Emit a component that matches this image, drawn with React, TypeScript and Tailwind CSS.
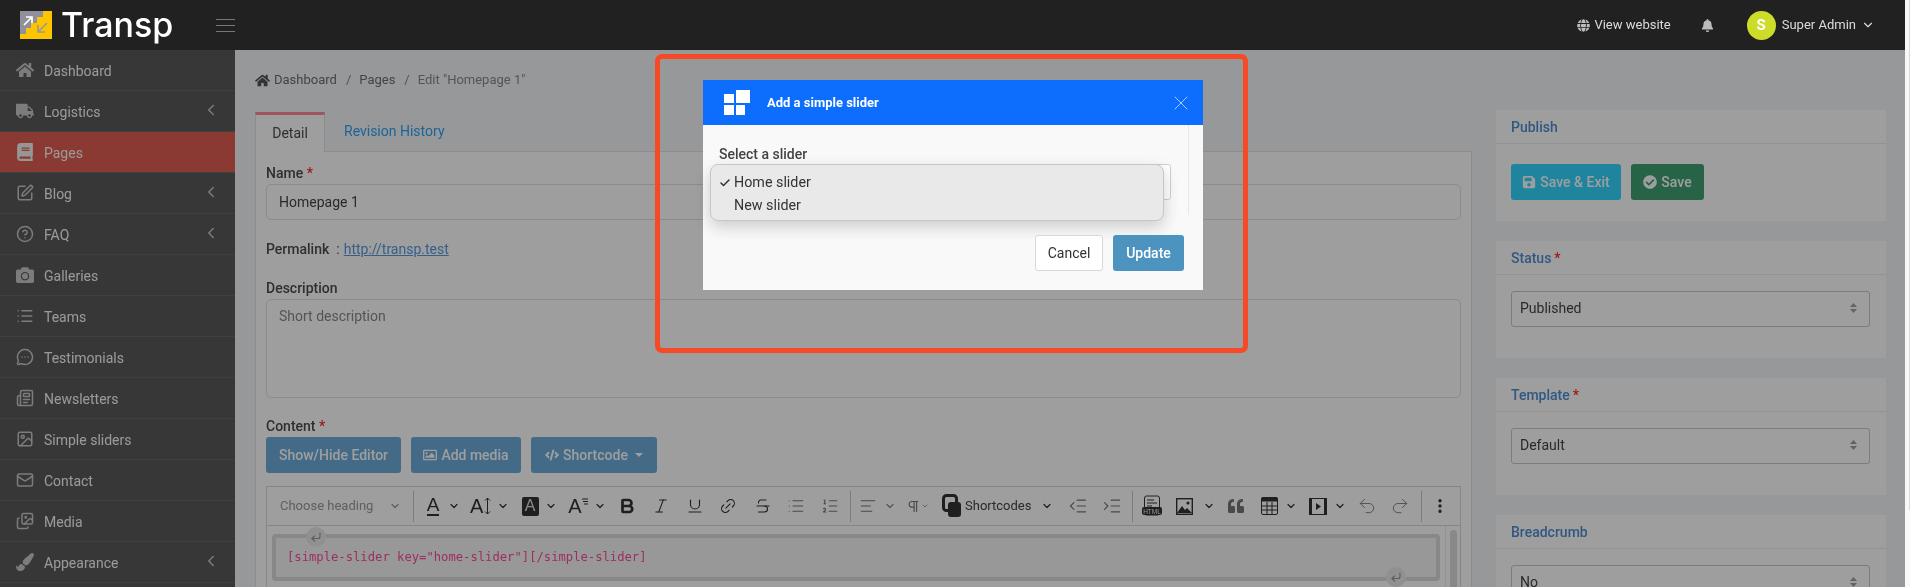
import type { ReactNode } from "react";
import {
  AlignLeft,
  Bold,
  Check,
  ChevronDown,
  ChevronLeft,
  CircleHelp,
  CornerDownLeft,
  EllipsisVertical,
  Image,
  Images,
  Indent,
  Italic,
  Link2,
  List,
  ListOrdered,
  Mail,
  MessageCircleMore,
  Newspaper,
  Outdent,
  Pilcrow,
  Redo2,
  SquarePen,
  Strikethrough,
  Underline,
  Undo2,
  X,
} from "lucide-react";
import {
  FaBell,
  FaBook,
  FaCamera,
  FaCheckCircle,
  FaCode,
  FaGlobe,
  FaHome,
  FaPaintBrush,
  FaQuoteLeft,
  FaRegImage,
  FaSave,
  FaTruck,
} from "react-icons/fa";

const menu = [
  { label: "Dashboard", icon: FaHome },
  { label: "Logistics", icon: FaTruck, arrow: true },
  { label: "Pages", icon: FaBook, active: true },
  { label: "Blog", icon: SquarePen, arrow: true },
  { label: "FAQ", icon: CircleHelp, arrow: true },
  { label: "Galleries", icon: FaCamera },
  { label: "Teams", icon: List },
  { label: "Testimonials", icon: MessageCircleMore },
  { label: "Newsletters", icon: Newspaper },
  { label: "Simple sliders", icon: Image },
  { label: "Contact", icon: Mail },
  { label: "Media", icon: Images },
  { label: "Appearance", icon: FaPaintBrush, arrow: true },
];

function Logo() {
  return (
    <svg width="32" height="28" viewBox="0 0 32 28" className="shrink-0">
      <rect width="32" height="28" fill="#fdc500" />
      <path d="M0 0H23V6H17V12H11V17H6V23H0Z" fill="#8f909c" />
      <path d="M4 14L11 7M6 6H12V12" stroke="#fff" strokeWidth="1.7" fill="none" />
      <path d="M27 12L19 20M18 14V21H25" stroke="#9c9a8c" strokeWidth="1.7" fill="none" />
    </svg>
  );
}

function Topbar() {
  return (
    <header className="relative z-20 flex h-[50px] items-center bg-[#212121] text-[#dcdcdc]">
      <div className="ml-[20px] flex items-center">
        <Logo />
        <span className="ml-[9px] font-['Inter',sans-serif] text-[34px] font-medium leading-none text-white">
          Transp
        </span>
      </div>
      <div className="ml-[43px] flex w-[19px] flex-col gap-[5px]">
        <div className="h-px bg-[#777]" />
        <div className="h-px bg-[#777]" />
        <div className="h-px bg-[#777]" />
      </div>
      <div className="ml-auto flex items-center text-[13px]">
        <FaGlobe className="text-[13px] text-[#bbb]" />
        <span className="ml-[4px]">View website</span>
        <FaBell className="ml-[30px] text-[13px] text-[#bbb]" />
        <div className="ml-[33px] flex h-[29px] w-[29px] items-center justify-center rounded-full bg-[#cddc28] text-[15px] font-bold text-white">
          S
        </div>
        <span className="ml-[6px]">Super Admin</span>
        <ChevronDown className="ml-[5px] mr-[30px] h-[14px] w-[14px]" />
      </div>
    </header>
  );
}

function Sidebar() {
  return (
    <aside className="h-[537px] w-[235px] shrink-0 overflow-hidden bg-[#5a5a5a]">
      {menu.map((item) => {
        const Icon = item.icon;
        return (
          <div
            key={item.label}
            className={`flex h-[41px] items-center border-b border-[#676767] pt-[2px] text-[14px] text-[#f8f8f8] ${
              item.active ? "bg-[#df5e52]" : ""
            }`}
          >
            <div className="flex w-[44px] justify-center pl-[6px]">
              <Icon className={`mb-[2px] h-[18px] w-[18px] ${item.active ? "text-[#f2f2f2]" : "text-[#c8c8c8]"}`} />
            </div>
            <span>{item.label}</span>
            {item.arrow && <ChevronLeft className="ml-auto mb-[4px] mr-[15px] h-[18px] w-[18px] text-[#c8c8c8]" />}
          </div>
        );
      })}
    </aside>
  );
}

function Star() {
  return <span className="text-[#ff2727]"> *</span>;
}

function Label({ children }: { children: ReactNode }) {
  return <div className="h-[21px] text-[14px] font-medium leading-[21px] text-[#4d4d4d]">{children}</div>;
}

function EditorButton({ children, className }: { children: ReactNode; className: string }) {
  return (
    <button className={`flex h-[36px] items-center justify-center rounded-[3px] bg-[#6cadda] text-[14px] font-medium text-white ${className}`}>
      {children}
    </button>
  );
}

function Caret({ className }: { className: string }) {
  return <ChevronDown strokeWidth={2.4} className={`h-[12px] w-[12px] shrink-0 text-[#333] ${className}`} />;
}

function Sep({ className }: { className: string }) {
  return <div className={`h-[31px] w-px shrink-0 bg-[#c9c9c9] ${className}`} />;
}

function Tool({ children, className }: { children: ReactNode; className: string }) {
  return <div className={`flex w-[20px] shrink-0 items-center justify-center text-[#333] ${className}`}>{children}</div>;
}

function Toolbar() {
  const ic = "h-[18px] w-[18px]";
  return (
    <div className="flex h-[39px] items-center border-b border-[#d8d8d8]">
      <span className="ml-[13px] w-[94px] shrink-0 text-[13px] text-[#999]">Choose heading</span>
      <Caret className="ml-[15px] !text-[#999]" />
      <Sep className="ml-[12px]" />
      <Tool className="ml-[9px]">
        <span className="border-b-2 border-[#333] font-['Liberation_Sans',sans-serif] text-[19px] font-light leading-[18px]">A</span>
      </Tool>
      <Caret className="ml-[5px]" />
      <div className="ml-[10px] flex w-[24px] shrink-0 items-center font-['Liberation_Sans',sans-serif] text-[20px] leading-none text-[#333]">
        A
        <svg width="7" height="18" viewBox="0 0 7 18" className="ml-[1px]">
          <path d="M3.5 1V17M1 3.5L3.5 1L6 3.5M1 14.5L3.5 17L6 14.5" stroke="#333" fill="none" />
        </svg>
      </div>
      <Caret className="ml-[3px]" />
      <Tool className="ml-[11px]">
        <span className="flex h-[19px] w-[17px] items-center justify-center rounded-[2px] bg-[#333] font-['Liberation_Sans',sans-serif] text-[16px] text-[#ddd]">
          A
        </span>
      </Tool>
      <Caret className="ml-[5px]" />
      <Tool className="ml-[11px]">
        <span className="font-['Liberation_Sans',sans-serif] text-[20px] leading-none">A</span>
        <svg width="6" height="8" viewBox="0 0 6 8" className="mb-[8px]">
          <path d="M0 1H6M1 3.5H6M2 6H6" stroke="#333" />
        </svg>
      </Tool>
      <Caret className="ml-[6px]" />
      <Tool className="ml-[11px]"><Bold strokeWidth={3.6} className={ic} /></Tool>
      <Tool className="ml-[14px]"><Italic className={ic} strokeWidth={1.4} /></Tool>
      <Tool className="ml-[14px]"><Underline className={ic} strokeWidth={1.5} /></Tool>
      <Tool className="ml-[13px]"><Link2 className={`${ic} -rotate-45`} strokeWidth={1.5} /></Tool>
      <Tool className="ml-[15px]"><Strikethrough className={ic} strokeWidth={1.5} /></Tool>
      <Tool className="ml-[13px]"><List className={`${ic} text-[#777]`} strokeWidth={1.5} /></Tool>
      <Tool className="ml-[14px]"><ListOrdered className={`${ic} text-[#777]`} strokeWidth={1.5} /></Tool>
      <Sep className="ml-[10px]" />
      <Tool className="ml-[7px]"><AlignLeft className={`${ic} text-[#777]`} strokeWidth={1.5} /></Tool>
      <Caret className="ml-[6px] !text-[#888]" />
      <Tool className="ml-[7px]"><Pilcrow className="h-[15px] w-[15px] text-[#777]" strokeWidth={1.8} /></Tool>
      <Caret className="-ml-[2px] !h-[8px] !w-[8px] !text-[#888]" />
      <Tool className="ml-[13px]">
        <svg width="20" height="24" viewBox="0 0 20 24">
          <rect x="1.5" y="1.5" width="13" height="15" rx="3" fill="none" stroke="#333" strokeWidth="3" />
          <rect x="6" y="8" width="13" height="15" rx="3" fill="#333" />
        </svg>
      </Tool>
      <span className="ml-[3px] w-[65px] shrink-0 text-[13px] text-[#444]">Shortcodes</span>
      <Caret className="ml-[11px]" />
      <Tool className="ml-[15px]"><Outdent className="h-[20px] w-[20px] text-[#777]" strokeWidth={1.4} /></Tool>
      <Tool className="ml-[14px]"><Indent className="h-[20px] w-[20px] text-[#777]" strokeWidth={1.4} /></Tool>
      <Sep className="ml-[10px]" />
      <Tool className="ml-[9px]">
        <svg width="20" height="22" viewBox="0 0 20 22">
          <rect x="2.5" y="1" width="15" height="19" rx="2" fill="none" stroke="#333" />
          <path d="M5 5H12M5 8H15M5 11H10" stroke="#333" />
          <rect y="12" width="20" height="8" rx="2" fill="#333" />
          <text x="10" y="18.6" textAnchor="middle" fontSize="6.5" fill="#eee" fontFamily="Liberation Sans">
            HTML
          </text>
        </svg>
      </Tool>
      <Tool className="ml-[12px]">
        <svg width="17" height="17" viewBox="0 0 17 17">
          <rect x=".7" y=".7" width="15.6" height="15.6" fill="none" stroke="#333" strokeWidth="1.4" />
          <path d="M1 15L6 8L9 12L11 10L16 15Z" fill="#333" />
          <circle cx="12" cy="5" r="1.6" fill="#333" />
        </svg>
      </Tool>
      <Caret className="ml-[9px]" />
      <Tool className="ml-[11px]"><FaQuoteLeft className="text-[16px] text-[#777]" /></Tool>
      <Tool className="ml-[13px]">
        <svg width="17" height="18" viewBox="0 0 17 18">
          <rect x=".5" y=".5" width="16" height="17" rx="1.5" fill="none" stroke="#333" />
          <rect x=".5" y=".5" width="16" height="4" fill="#333" />
          <path d="M6 5V17M11 5V17M1 9H16M1 13H16" stroke="#333" />
        </svg>
      </Tool>
      <Caret className="ml-[6px]" />
      <Tool className="ml-[11px]">
        <svg width="18" height="17" viewBox="0 0 18 17">
          <rect x=".5" y=".5" width="17" height="16" fill="none" stroke="#333" />
          <path d="M.5 0V17H3V0ZM15 0V17H17.5V0Z" fill="#333" />
          <path d="M7 5L12 8.5L7 12Z" fill="#333" />
        </svg>
      </Tool>
      <Caret className="ml-[6px]" />
      <Tool className="ml-[11px]"><Undo2 className="h-[20px] w-[20px] text-[#888]" strokeWidth={1.2} /></Tool>
      <Tool className="ml-[13px]"><Redo2 className="h-[20px] w-[20px] text-[#888]" strokeWidth={1.2} /></Tool>
      <Sep className="ml-[11px]" />
      <Tool className="ml-[8px]"><EllipsisVertical className={ic} strokeWidth={2.4} /></Tool>
    </div>
  );
}

function Editor() {
  return (
    <div className="mt-[13px] h-[120px] border border-[#d8d8d8]">
      <Toolbar />
      <div className="flex">
        <div className="min-w-0 flex-1 px-[5px] pt-[8px]">
          <div className="relative h-[47px] rounded-[4px] border-[4px] border-[#dbdbdb] bg-[#f6f6f6] pl-[11px] pt-[9px] font-['DejaVu_Sans_Mono',monospace] text-[12.2px] leading-[20px] text-[#fb4c9a]">
            [simple-slider key="home-slider"][/simple-slider]
            <div className="absolute -top-[11px] left-[30px] flex h-[20px] w-[20px] items-center justify-center rounded-full bg-[#e9e9e9]">
              <CornerDownLeft className="h-[12px] w-[12px] text-[#999]" strokeWidth={2.4} />
            </div>
            <div className="absolute -bottom-[10px] right-[30px] flex h-[20px] w-[20px] items-center justify-center rounded-full bg-[#e9e9e9]">
              <CornerDownLeft className="h-[12px] w-[12px] text-[#999]" strokeWidth={2.4} />
            </div>
          </div>
        </div>
        <div className="h-[80px] w-[15px] shrink-0 border-l border-[#ececec] pl-[4px] pt-[4px]">
          <div className="h-full w-[7px] rounded-full bg-[#dcdcdc]" />
        </div>
      </div>
    </div>
  );
}

function MainForm() {
  return (
    <div className="w-[1217px] shrink-0">
      <nav className="flex h-[62px] items-center pb-[2px] text-[13px] text-[#6e6e6e]">
        <FaHome className="text-[15px] text-[#555]" />
        <span className="ml-[4px]">Dashboard</span>
        <span className="ml-[9px] text-[#888]">/</span>
        <span className="ml-[8px]">Pages</span>
        <span className="ml-[9px] text-[#888]">/</span>
        <span className="ml-[8px] text-[#8a8a8a]">Edit "Homepage 1"</span>
      </nav>
      <div className="flex h-[40px] border-b border-[#e2e2e2]">
        <div className="-mb-px flex w-[70px] items-center justify-center border-x border-t-[3px] border-x-[#e2e2e2] border-t-[#ff8a9b] bg-white text-[14px] text-[#4d4d4d]">
          Detail
        </div>
        <div className="ml-[19px] pt-[9px] text-[14px] text-[#30a1f2]">Revision History</div>
      </div>
      <div className="h-[440px] border-x border-[#e2e2e2] bg-white px-[10px] pt-[11px]">
        <Label>
          Name<Star />
        </Label>
        <div className="flex h-[36px] items-center rounded-[5px] border border-[#e0e0e0] px-[12px] text-[14px] text-[#444]">
          Homepage 1
        </div>
        <div className="mt-[19px] flex h-[21px] items-center text-[14px] font-medium text-[#4d4d4d]">
          Permalink
          <span className="ml-[7px] font-normal">:</span>
          <span className="ml-[4px] font-normal text-[#5799df] underline">http://transp.test</span>
        </div>
        <div className="mt-[18px]">
          <Label>Description</Label>
        </div>
        <div className="h-[99px] rounded-[5px] border border-[#e0e0e0] px-[12px] py-[6px] text-[14px] text-[#8a8a8a]">
          Short description
        </div>
        <div className="mt-[18px]">
          <Label>
            Content<Star />
          </Label>
        </div>
        <div className="flex gap-[10px]">
          <EditorButton className="w-[135px]">Show/Hide Editor</EditorButton>
          <EditorButton className="w-[110px] gap-[4px]">
            <FaRegImage className="text-[14px]" /> Add media
          </EditorButton>
          <EditorButton className="w-[126px] gap-[4px]">
            <FaCode className="text-[14px]" /> Shortcode
            <span className="ml-[3px] border-x-[4px] border-t-[4px] border-x-transparent border-t-white" />
          </EditorButton>
        </div>
        <Editor />
      </div>
    </div>
  );
}

function Panel({ title, star, children, className }: { title: string; star?: boolean; children: ReactNode; className: string }) {
  return (
    <section className={`bg-white ${className}`}>
      <div className="flex h-[34px] items-center border-b border-[#eeeeee] px-[15px] pt-[2px] text-[14px] font-medium text-[#508ed2]">
        <span>{title}</span>
        {star && <span className="ml-[3px] text-[#ff2727]">*</span>}
      </div>
      {children}
    </section>
  );
}

function SelectBox({ value }: { value: string }) {
  return (
    <div className="ml-[15px] mr-[16px] mt-[16px] flex h-[36px] items-center justify-between rounded-[3px] border border-[#c8c8c8] pb-[2px] pl-[8px] pr-[12px] text-[14px] text-[#444]">
      {value}
      <svg width="7" height="12" viewBox="0 0 7 12">
        <path d="M3.5 1L7 5H0ZM3.5 11L7 7H0Z" fill="#a0a0a0" />
      </svg>
    </div>
  );
}

function RightColumn() {
  return (
    <div className="ml-[24px] w-[390px] shrink-0 pt-[60px]">
      <Panel title="Publish" className="h-[111px]">
        <div className="flex gap-[10px] px-[15px] pt-[20px]">
          <button className="flex h-[36px] w-[110px] items-center justify-center gap-[4px] rounded-[3px] bg-[#32d5ff] text-[14px] font-medium text-white">
            <FaSave className="text-[14px]" /> Save &amp; Exit
          </button>
          <button className="flex h-[36px] w-[73px] items-center justify-center gap-[4px] rounded-[3px] bg-[#40a072] text-[14px] font-medium text-white">
            <FaCheckCircle className="text-[14px]" /> Save
          </button>
        </div>
      </Panel>
      <Panel title="Status" star className="mt-[20px] h-[117px]">
        <SelectBox value="Published" />
      </Panel>
      <Panel title="Template" star className="mt-[20px] h-[117px]">
        <SelectBox value="Default" />
      </Panel>
      <Panel title="Breadcrumb" className="mt-[20px] h-[117px]">
        <SelectBox value="No" />
      </Panel>
    </div>
  );
}

function SliderModal() {
  return (
    <div className="absolute left-[703px] top-[80px] z-30 flex h-[210px] w-[500px] flex-col bg-[#f9f9f9]">
      <div className="flex h-[45px] items-center bg-[#0d6efd] text-white">
        <svg width="26" height="25" viewBox="0 0 26 25" className="ml-[21px]">
          <path d="M0 4H10V13H0ZM12 0H26V13H12ZM0 15H10V25H0ZM12 15H21V25H12Z" fill="#fff" />
        </svg>
        <span className="ml-[17px] text-[13px] font-bold">Add a simple slider</span>
        <X className="ml-auto mr-[10px] h-[24px] w-[24px] text-[#a8cbff]" strokeWidth={1} />
      </div>
      <div className="relative flex-1">
        <div className="absolute left-[16px] top-[19px] text-[14px] font-medium leading-[21px] text-[#444]">Select a slider</div>
        <div className="absolute left-[15px] top-[39px] h-[36px] w-[453px] rounded-[3px] border border-[#ccd0d5] bg-white" />
        <div className="absolute bottom-[75px] right-[14px] top-0 w-px bg-[#e8e8e8]" />
        <div className="absolute left-[7px] top-[39px] h-[57px] w-[454px] rounded-[8px] border border-[#c4c8cc] bg-[#e8e9e8] pt-[7px] text-[14.3px] text-[#333] shadow-[0_6px_16px_rgba(0,0,0,0.18)]">
          <div className="flex h-[21px] items-center pl-[8px]">
            <Check className="mr-[3px] h-[12px] w-[12px]" strokeWidth={3} />
            Home slider
          </div>
          <div className="mt-[2px] flex h-[21px] items-center pl-[23px]">New slider</div>
        </div>
        <div className="absolute left-[332px] top-[110px] flex h-[36px] w-[68px] items-center justify-center rounded-[3px] border border-[#d8d8d8] bg-white text-[14px] text-[#333]">
          Cancel
        </div>
        <div className="absolute left-[410px] top-[110px] flex h-[36px] w-[71px] items-center justify-center rounded-[3px] bg-[#4d93bf] text-[14px] font-medium text-white">
          Update
        </div>
      </div>
    </div>
  );
}

export default function App() {
  return (
    <div className="relative flex h-[587px] w-[1910px] overflow-hidden bg-[#f8f8f8] font-['Roboto',sans-serif] blur-[0.35px]">
      <div className="w-[1905px] shrink-0">
        <Topbar />
        <div className="flex h-[537px] overflow-hidden bg-[#f3f5f8]">
          <Sidebar />
          <div className="flex min-w-0 flex-1 pl-[20px]">
            <MainForm />
            <RightColumn />
          </div>
        </div>
      </div>
      <div className="absolute bottom-0 left-0 top-[50px] z-10 w-[1905px] bg-black/[0.38]" />
      <div className="absolute right-0 top-0 z-20 h-[510px] w-px bg-[#d8d8d8]" />
      <SliderModal />
      <div className="absolute left-[655px] top-[54px] z-40 h-[299px] w-[593px] rounded-[7px] border-[5px] border-[#f64a26]" />
    </div>
  );
}
